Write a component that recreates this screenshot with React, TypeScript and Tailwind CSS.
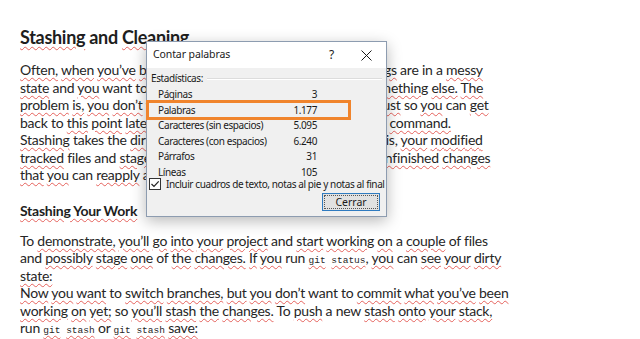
import type { ReactNode } from 'react'

const DOC_FONT = "font-['Lato','Open_Sans',sans-serif]"
const UI_FONT = "font-['Noto_Sans','Open_Sans',sans-serif]"
const SQUIGGLE = 'underline decoration-wavy decoration-[#e0403a]/80 decoration-1 underline-offset-[2px]'
const MONO = "font-['Liberation_Mono',monospace] text-[9.5px] tracking-normal"

// "~word" gets the spell-check squiggle, "`git stash`" renders as code
function Line({ t }: { t: string }) {
  const parts: ReactNode[] = []
  t.split(/(`[^`]+`)/).forEach((chunk, ci) => {
    if (chunk.startsWith('`')) {
      const words = chunk.slice(1, -1).split(' ')
      words.forEach((w, wi) => {
        parts.push(
          <span key={`c${ci}-${wi}`} className={`${MONO} ${SQUIGGLE}`}>
            {w}
          </span>
        )
        if (wi < words.length - 1) parts.push(<span key={`cs${ci}-${wi}`} className={MONO}> </span>)
      })
      return
    }
    chunk.split(/( )/).forEach((w, wi) => {
      if (w.startsWith('~')) {
        parts.push(
          <span key={`w${ci}-${wi}`} className={SQUIGGLE}>
            {w.slice(1)}
          </span>
        )
      } else if (w) {
        parts.push(w)
      }
    })
  })
  return <div className="whitespace-pre h-[17.5px] leading-[17.5px]">{parts}</div>
}

const para1 = [
  "~Often, ~when ~you’ve ~been ~working ~on ~part ~of ~your ~project, ~things are in a ~messy",
  "~state and ~you want to ~switch ~branches for a bit to work on ~something ~else. ~The",
  "~problem ~is, ~you ~don’t want to do a commit of half-done work ~just so ~you can ~get",
  "back to ~this ~point ~later. The answer to this issue is the git stash ~command.",
  "~Stashing takes the ~dirty state of your working directory — that is, ~your ~modified",
  "~tracked files and ~staged changes — and saves it on a stack of ~unfinished ~changes",
  "~that ~you can ~reapply at any time.",
]

const para2 = [
  "To ~demonstrate, ~you’ll ~go ~into ~your ~project and ~start ~working ~on a ~couple of files",
  "and ~possibly ~stage ~one of ~the ~changes. ~If ~you run `git status`, ~you can ~see ~your ~dirty",
  "~state:",
  "~Now ~you ~want to ~switch ~branches, ~but ~you ~don’t want to ~commit ~what ~you’ve ~been",
  "~working ~on ~yet; so ~you’ll ~stash ~the ~changes. To ~push a new ~stash ~onto ~your ~stack,",
  "run `git stash` or `git stash` ~save:",
]

const stats = [
  ['Páginas', '3'],
  ['Palabras', '1.177'],
  ['Caracteres (sin espacios)', '5.095'],
  ['Caracteres (con espacios)', '6.240'],
  ['Párrafos', '31'],
  ['Líneas', '105'],
]

function WordCountDialog() {
  return (
    <div className={`absolute left-[146px] top-[41px] w-[241px] h-[176px] border border-[#8d9cb0] bg-[#f0f0f0] shadow-[0_4px_14px_rgba(0,0,0,0.28)] flex flex-col text-[10px] tracking-[-0.4px] text-[#1a1a1a] ${UI_FONT}`}>
      <div className="h-[26px] bg-white flex items-center pl-[6px] shrink-0 text-[10.5px] tracking-[-0.1px]">
        <span>Contar palabras</span>
        <span className="ml-auto mr-[27px] text-[12px]">?</span>
        <svg width="11" height="11" viewBox="0 0 11 11" className="mr-[14px]">
          <path d="M0.5 0.5 L10.5 10.5 M10.5 0.5 L0.5 10.5" stroke="#1a1a1a" strokeWidth="1" />
        </svg>
      </div>
      <div className="flex flex-col pt-[2px] px-[4px]">
        <div className="h-[16px] leading-[16px] flex items-center gap-[4px]">
          <span>Estadísticas:</span>
          <span className="flex-1 h-[2px] border-t border-[#dcdcdc] border-b border-b-white mt-[2px]" />
        </div>
        <div className="mt-[1px] pl-[7px] w-[166px]">
          {stats.map(([label, value]) => (
            <div key={label} className="h-[15.5px] leading-[15.5px] flex justify-between whitespace-nowrap">
              <span>{label}</span>
              <span>{value}</span>
            </div>
          ))}
        </div>
        <div className="mt-[-2px] h-[12px] flex items-center">
          <span className="w-[12px] h-[12px] border border-[#333] bg-white flex items-center justify-center shrink-0 -ml-[2px]">
            <svg width="10" height="10" viewBox="0 0 10 10">
              <path d="M1.5 5 L4 7.5 L8.7 2.3" stroke="#222" strokeWidth="1.2" fill="none" />
            </svg>
          </span>
          <span className="ml-[5px] whitespace-nowrap">Incluir cuadros de texto, notas al pie y notas al final</span>
        </div>
        <div className="mt-[3px] flex justify-end pr-[2px]">
          <button className="w-[58px] h-[18px] border border-[#2f7bc0] bg-[#e1e1e1] flex items-center justify-center p-[1px]">
            <span className="w-full h-full border border-dotted border-[#555] flex items-center justify-center text-[10.5px] leading-none tracking-normal">
              Cerrar
            </span>
          </button>
        </div>
      </div>
    </div>
  )
}

export default function App() {
  return (
    <div className={`relative w-[640px] h-[339px] overflow-hidden bg-white text-[#262626] ${DOC_FONT}`}>
      <div className="pl-[20px] pt-[25px] text-[14px] tracking-[-0.25px]">
        <h1 className="h-[24px] leading-[24px] text-[18px] tracking-[-0.3px] font-bold text-[#1e1e1e]">
          <span className={SQUIGGLE}>Stashing</span> and <span className={SQUIGGLE}>Cleaning</span>
        </h1>
        <div className="mt-[12px]">
          {para1.map((t, i) => (
            <Line key={i} t={t} />
          ))}
        </div>
        <h2 className="mt-[18px] h-[18px] leading-[18px] text-[14px] font-bold text-[#1e1e1e]">
          <span className={SQUIGGLE}>Stashing Your Work</span>
        </h2>
        <div className="mt-[12px]">
          {para2.map((t, i) => (
            <Line key={i} t={t} />
          ))}
        </div>
      </div>
      <WordCountDialog />
      <div className="absolute left-[146px] top-[100px] w-[205px] h-[20px] border-[3px] border-[#f0842c]" />
    </div>
  )
}
